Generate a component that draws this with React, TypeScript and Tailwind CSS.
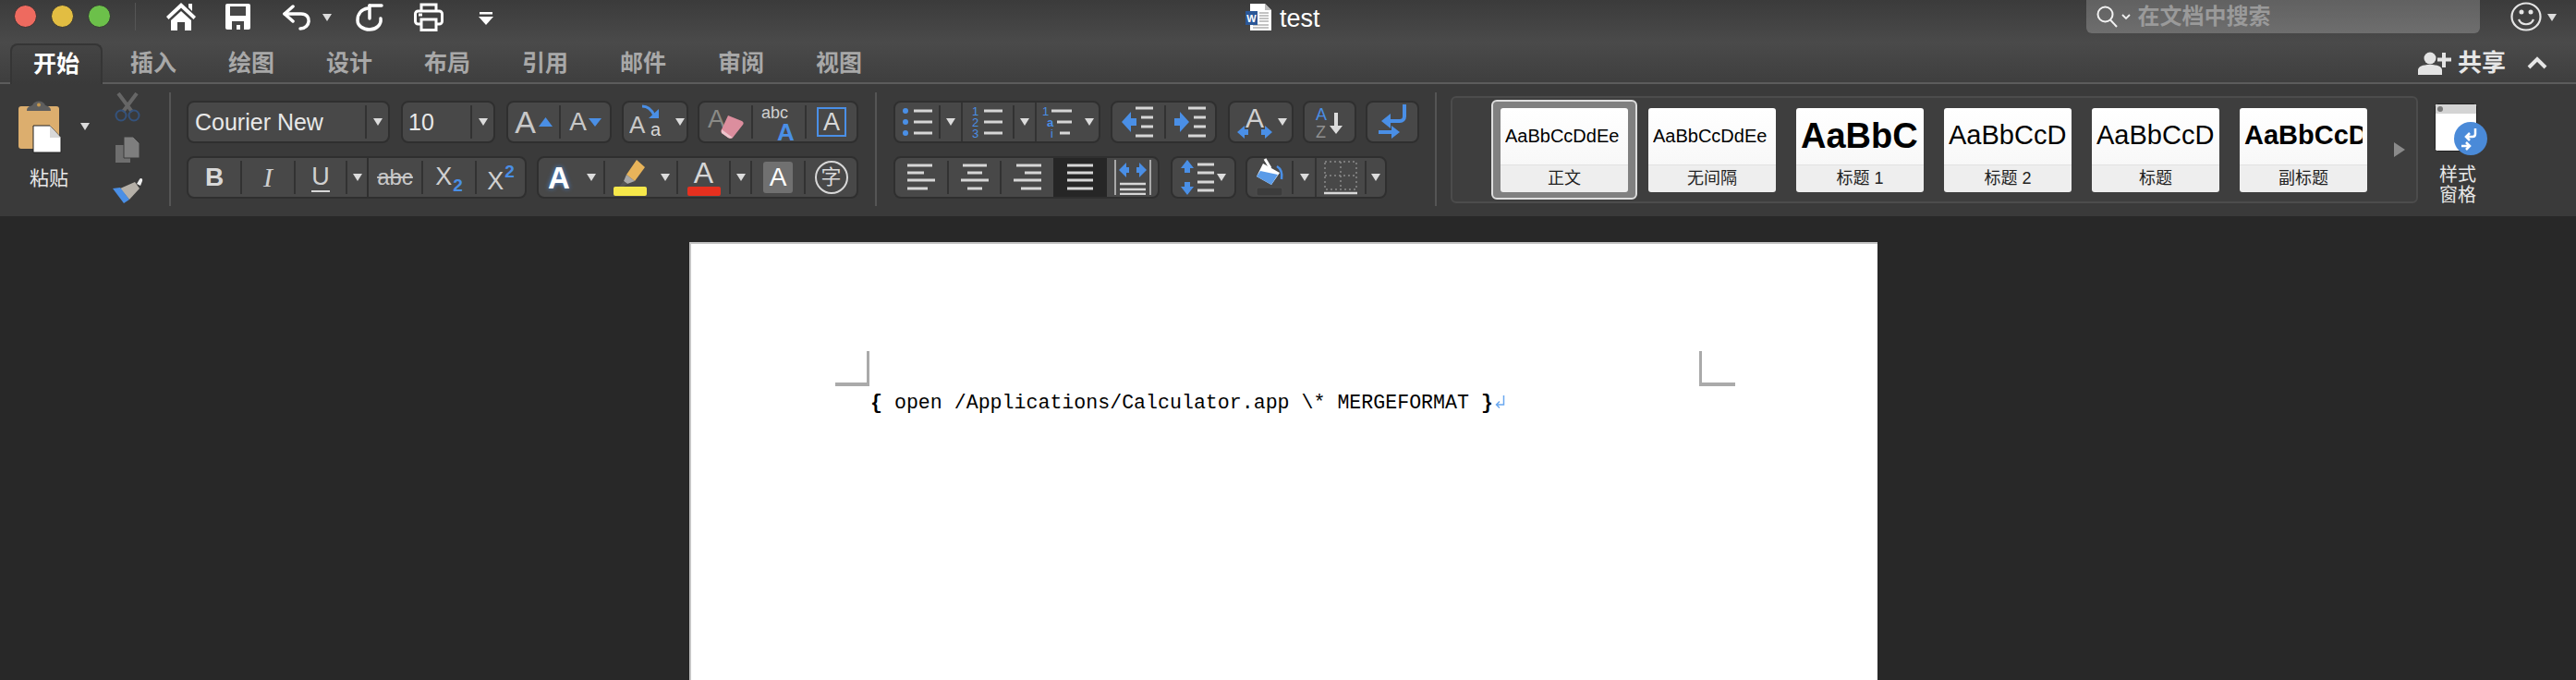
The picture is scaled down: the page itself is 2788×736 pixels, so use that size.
import React from 'react';

const BLUE = '#4a8fe6';
const ICON = '#d6d6d6';

function Caret({ className = '' }: { className?: string }) {
  return (
    <svg width="12" height="10" viewBox="0 0 12 10" className={className}>
      <path d="M1 1h10L6 9z" fill="#dcdcdc" />
    </svg>
  );
}

function Sep() {
  return <div className="w-[2px] h-[36px] bg-[#323232] shrink-0" />;
}

function Group({ className = '', children }: { className?: string; children: React.ReactNode }) {
  return (
    <div className={`h-[46px] rounded-[8px] bg-[#484848] border-2 border-[#2f2f2f] flex items-center shrink-0 overflow-hidden leading-none ${className}`}>
      {children}
    </div>
  );
}

function Cell({ className = '', children }: { className?: string; children?: React.ReactNode }) {
  return <div className={`h-full flex items-center justify-center shrink-0 ${className}`}>{children}</div>;
}

function StyleCard({ label, sample, textClass, selected }: { label: string; sample: string; textClass: string; selected?: boolean }) {
  const card = (
    <div className="w-[138px] h-[91px] rounded-[3px] overflow-hidden flex flex-col shrink-0">
      <div className="h-[61px] bg-gradient-to-b from-white to-[#f8f8f8] text-black px-[5px]">
        <div className="h-full flex items-center overflow-hidden whitespace-nowrap">
          <span className={textClass}>{sample}</span>
        </div>
      </div>
      <div className="h-[30px] bg-[#eeeeee] border-t border-[#e2e2e2] text-[18px] leading-[28px] text-[#222] text-center">{label}</div>
    </div>
  );
  if (selected) {
    return (
      <div className="w-[158px] h-[108px] -mr-[10px] rounded-[6px] border-2 border-[#dddddd] bg-[#808080] flex items-center justify-center shrink-0">
        {card}
      </div>
    );
  }
  return card;
}

export default function App() {
  return (
    <div className="w-[2788px] h-[736px] overflow-hidden bg-[#282828] flex flex-col font-['Liberation_Sans','Noto_Sans_CJK_SC',sans-serif]">
      <div className="bg-gradient-to-b from-[#3b3b3b] via-[#4a4a4a] to-[#3e3e3e] shrink-0">
        {/* title bar */}
        <div className="h-[44px] flex items-start">
          <div className="flex gap-[15px] ml-[15px] mt-[5px]">
            <div className="w-[25px] h-[25px] rounded-full bg-[#ee6a5f] border border-[#333]" />
            <div className="w-[25px] h-[25px] rounded-full bg-[#e2bd42] border border-[#333]" />
            <div className="w-[25px] h-[25px] rounded-full bg-[#6cc04a] border border-[#333]" />
          </div>
          <div className="w-[1px] h-[30px] bg-[#555] ml-[26px] mt-[3px]" />
          {/* home */}
          <svg width="32" height="30" viewBox="0 0 32 30" className="ml-[33px] mt-[3px]">
            <path d="M16 0 32 15l-2.500 3L16 5.500 2.500 18 0 15z M24 1h4v8l-4-4z" fill="#fff" />
            <path d="M16 9 27 19v11h-7v-9h-8v9H5V19z" fill="#fff" />
          </svg>
          {/* save */}
          <svg width="27" height="28" viewBox="0 0 27 28" className="ml-[32px] mt-[4px]">
            <path d="M2 0h23a2 2 0 0 1 2 2v24a2 2 0 0 1-2 2H2a2 2 0 0 1-2-2V2a2 2 0 0 1 2-2z" fill="#fff" />
            <rect x="5" y="3" width="17" height="10" fill="#474747" />
            <path d="M7 28v-9h13v9h-4v-5h-4v5z" fill="#474747" />
          </svg>
          {/* undo */}
          <svg width="32" height="28" viewBox="0 0 32 28" className="ml-[34px] mt-[5px]" fill="none" stroke="#fff" strokeWidth="3.500" strokeLinecap="round" strokeLinejoin="round">
            <path d="M12 2 3 10l9 8" />
            <path d="M3 10h18c12 0 10 16-1 16" />
          </svg>
          <Caret className="ml-[11px] mt-[14px]" />
          {/* redo */}
          <svg width="30" height="30" viewBox="0 0 30 30" className="ml-[25px] mt-[4px]" fill="none" stroke="#fff" strokeWidth="3.500" strokeLinecap="round">
            <path d="M15 2h13" />
            <path d="M15 2v14" />
            <path d="M13 5C6 6 2 11 2 18c0 6 6 10 13 10s13-5 12-12" />
          </svg>
          {/* print */}
          <svg width="32" height="31" viewBox="0 0 32 31" className="ml-[33px] mt-[3px]" fill="none" stroke="#fff" strokeWidth="3">
            <path d="M8 9V2h16v7" />
            <rect x="1.500" y="9" width="29" height="14" rx="3" />
            <path d="M8 18v11.500h16V18z" fill="#474747" />
            <path d="M5 13h4" />
          </svg>
          {/* customize */}
          <svg width="16" height="14" viewBox="0 0 16 14" className="ml-[38px] mt-[13px]">
            <rect x="1" y="0" width="14" height="2.500" fill="#fff" />
            <path d="M0 5h16l-8 9z" fill="#fff" />
          </svg>
          {/* doc title */}
          <svg width="28" height="29" viewBox="0 0 28 29" className="ml-[814px] mt-[4px]">
            <path d="M5 0h16l7 7v22H5z" fill="#fff" />
            <path d="M21 0v7h7z" fill="#bbb" />
            <path d="M15 10h10M15 13h10M15 16h10M15 19h10M8 23h17M8 26h17" stroke="#888" strokeWidth="1" />
            <rect x="0" y="8" width="13" height="15" fill="#2b5797" />
            <text x="6.500" y="20" fontSize="11" fontWeight="700" fill="#fff" textAnchor="middle" fontFamily="Liberation Sans">W</text>
          </svg>
          <div className="ml-[9px] mt-[2px] text-[27px] leading-[36px] text-white">test</div>
          {/* search */}
          <div className="ml-[829px] w-[426px] h-[36px] rounded-b-[6px] bg-gradient-to-b from-[#616161] to-[#6e6e6e] flex items-center">
            <svg width="24" height="24" viewBox="0 0 24 24" className="ml-[11px]" fill="none" stroke="#f2f2f2" strokeWidth="2">
              <circle cx="9.500" cy="9.500" r="8" />
              <path d="M15 15.500 22 23" />
            </svg>
            <svg width="10" height="7" viewBox="0 0 10 7" className="ml-[3px]" fill="none" stroke="#eee" strokeWidth="1.800">
              <path d="M1 1l4 4 4-4" />
            </svg>
            <span className="ml-[8px] text-[24px] font-bold text-[#9a9a9a]">在文档中搜索</span>
          </div>
          {/* smiley */}
          <svg width="34" height="32" viewBox="0 0 34 32" className="ml-[33px] mt-[2px]" fill="none" stroke="#e4e4e4" strokeWidth="2.200">
            <ellipse cx="17" cy="16" rx="15.500" ry="14.500" />
            <path d="M9 19c3 7 13 7 16 0" />
            <circle cx="12" cy="11" r="1.400" fill="#e4e4e4" />
            <circle cx="22" cy="11" r="1.400" fill="#e4e4e4" />
          </svg>
          <Caret className="ml-[5px] mt-[14px]" />
        </div>

        {/* tabs */}
        <div className="h-[47px] flex items-end border-b-2 border-[#5c5c5c] text-[25px] font-bold text-[#a8a8a8]">
          <div className="ml-[11px] w-[100px] h-[44px] -mb-[2px] rounded-t-[8px] bg-gradient-to-b from-[#444444] to-[#3a3a3a] border-2 border-b-0 border-[#353535] text-white text-center leading-[40px]">开始</div>
          <div className="ml-[2px] w-[106px] h-[42px] text-center leading-[42px]">插入</div>
          <div className="w-[106px] h-[42px] text-center leading-[42px]">绘图</div>
          <div className="w-[106px] h-[42px] text-center leading-[42px]">设计</div>
          <div className="w-[106px] h-[42px] text-center leading-[42px]">布局</div>
          <div className="w-[106px] h-[42px] text-center leading-[42px]">引用</div>
          <div className="w-[106px] h-[42px] text-center leading-[42px]">邮件</div>
          <div className="w-[106px] h-[42px] text-center leading-[42px]">审阅</div>
          <div className="w-[106px] h-[42px] text-center leading-[42px]">视图</div>
          <div className="ml-auto h-[42px] flex items-center text-[#e6e6e6]">
            <svg width="36" height="25" viewBox="0 0 36 25">
              <circle cx="13" cy="7" r="6.500" fill="#e4e4e4" />
              <path d="M0 25v-5c0-4 5-6 13-6s13 2 13 6v5z" fill="#e4e4e4" />
              <path d="M28 1v16M21 8.500h15" stroke="#e4e4e4" strokeWidth="4" />
            </svg>
            <span className="ml-[7px] leading-[42px] text-[26px]">共享</span>
            <svg width="22" height="14" viewBox="0 0 22 14" className="ml-[23px] mr-[31px]" fill="none" stroke="#e6e6e6" strokeWidth="4">
              <path d="M2 12l9-9 9 9" />
            </svg>
          </div>
        </div>
      </div>

      {/* ribbon */}
      <div className="h-[143px] bg-[#3a3a3a] flex items-start shrink-0 text-[#d6d6d6]">
        {/* clipboard */}
        <div className="ml-[20px] mt-[16px] w-[71px] flex flex-col items-start shrink-0">
          <div className="flex items-center">
            <svg width="48" height="59" viewBox="0 0 48 59">
              <rect x="0" y="8" width="44" height="46" rx="3" fill="#dcae6e" />
              <path d="M9 13c0-5 4-5 6-6 2-6 12-6 14 0 2 1 6 1 6 6z" fill="#5e5e5e" />
              <circle cx="22" cy="6.500" r="2" fill="#c4974e" />
              <path d="M16 29h18l12 13v16H16z" fill="#fff" stroke="#222" strokeWidth="1" />
              <path d="M34 29v13h12z" fill="#d8d8d8" />
            </svg>
            <Caret className="ml-[18px]" />
          </div>
          <div className="ml-[12px] mt-[15px] text-[21px] leading-[24px] text-[#e8e8e8]">粘贴</div>
        </div>
        <div className="ml-[30px] mt-[9px] w-[34px] flex flex-col items-center gap-[16px] shrink-0">
          <svg width="28" height="32" viewBox="0 0 28 32" fill="none">
            <path d="M4 1 19 21M24 1 9 21" stroke="#666" strokeWidth="4" />
            <circle cx="7" cy="25" r="5.500" stroke="#34527c" strokeWidth="2" />
            <circle cx="21" cy="25" r="5.500" stroke="#34527c" strokeWidth="2" />
          </svg>
          <svg width="26" height="28" viewBox="0 0 26 28">
            <rect x="0" y="9" width="16" height="19" fill="#6e6e6e" />
            <path d="M9 0h10l7 7v16H9z" fill="#7e7e7e" stroke="#3a3a3a" strokeWidth="1" />
          </svg>
          <svg width="33" height="28" viewBox="0 0 33 28">
            <path d="M26 7l3-5c1-2 4-1 3 2l-2 5z" fill="#eee" />
            <path d="M8 12 24 5l5 7-11 12z" fill="#b5b0a8" />
            <path d="M0 12l8-1 10 13-6 4z" fill="#4a8fe6" />
          </svg>
        </div>
        <div className="w-[2px] h-[123px] bg-[#555] ml-[28px] mt-[9px] shrink-0" />

        {/* font section */}
        <div className="ml-[17px] mt-[18px] w-[727px] flex flex-col gap-[14px] shrink-0">
          <div className="flex">
            <Group className="w-[220px]">
              <Cell className="w-[191px] justify-start pl-[7px] text-[25px] text-[#e8e8e8]">Courier New</Cell>
              <Sep />
              <Cell className="flex-1"><Caret /></Cell>
            </Group>
            <Group className="w-[102px] ml-[12px]">
              <Cell className="w-[73px] justify-start pl-[6px] text-[25px] text-[#e8e8e8]">10</Cell>
              <Sep />
              <Cell className="flex-1"><Caret /></Cell>
            </Group>
            <Group className="w-[114px] ml-[12px]">
              <Cell className="w-[55px] gap-[3px] text-[34px] text-[#c8c8c8]">
                <span>A</span>
                <svg width="15" height="10" viewBox="0 0 15 10"><path d="M7.500 0 15 10H0z" fill={BLUE} /></svg>
              </Cell>
              <Sep />
              <Cell className="flex-1 gap-[2px] text-[28px] text-[#c8c8c8]">
                <span>A</span>
                <svg width="14" height="9" viewBox="0 0 14 9"><path d="M0 0h14L7 9z" fill={BLUE} /></svg>
              </Cell>
            </Group>
            <Group className="w-[72px] ml-[11px]">
              <svg width="48" height="38" viewBox="0 0 48 38" className="ml-[6px]">
                <text x="0" y="31" fontSize="26" fill="#c8c8c8" fontFamily="Liberation Sans">A</text>
                <text x="23" y="34" fontSize="20" fill="#d8d8d8" fontFamily="Liberation Sans">a</text>
                <path d="M14 2c6 0 10 3 13 10" fill="none" stroke={BLUE} strokeWidth="3" />
                <path d="M21 15h11V5z" fill={BLUE} />
              </svg>
              <Caret className="ml-[1px]" />
            </Group>
            <Group className="w-[174px] ml-[10px]">
              <Cell className="w-[56px]">
                <svg width="42" height="40" viewBox="0 0 42 40">
                  <text x="2" y="26" fontSize="28" fill="#8a8a86" fontFamily="Liberation Sans">A</text>
                  <path d="M24 13 39 19c2 1 2 3 1 4L29 37c-1 1-3 1-5 0l-7-5c-1-1-1-3 0-4z" fill="#dc8e9e" />
                  <path d="M17 28l12 9c-2 1-4 1-5 0l-7-5z" fill="#eec4cc" />
                </svg>
              </Cell>
              <Sep />
              <Cell className="w-[56px]">
                <svg width="38" height="42" viewBox="0 0 38 42" className="overflow-visible">
                  <text x="0" y="17" fontSize="18" fill="#d0d0d0" fontFamily="Liberation Sans">abc</text>
                  <text x="17" y="41" fontSize="26" fontWeight="700" fill={BLUE} fontFamily="Liberation Sans">A</text>
                </svg>
              </Cell>
              <Sep />
              <Cell className="flex-1">
                <div className="w-[32px] h-[32px] border-[2px] border-[#4a8fe6] flex items-center justify-center text-[27px] text-[#d8d8d8]">A</div>
              </Cell>
            </Group>
          </div>
          <div className="flex">
            <Group className="w-[368px]">
              <Cell className="w-[56px] text-[28px] font-bold text-[#d8d8d8]">B</Cell>
              <Sep />
              <Cell className="w-[56px] text-[30px] italic font-['Liberation_Serif'] text-[#d0d0d0]">I</Cell>
              <Sep />
              <Cell className="w-[54px]">
                <span className="text-[27px] leading-[29px] border-b-[2px] border-[#d8d8d8] text-[#d0d0d0]">U</span>
              </Cell>
              <Sep />
              <Cell className="w-[21px]"><Caret /></Cell>
              <div className="w-[2px] h-full bg-[#2f2f2f] shrink-0" />
              <Cell className="w-[57px] text-[24px] line-through text-[#c8c8c8]">abc</Cell>
              <Sep />
              <Cell className="w-[56px] items-start pt-[7px] text-[27px] text-[#d0d0d0]">
                X<span className="text-[19px] font-bold text-[#4a8fe6] mt-[13px] ml-[1px]">2</span>
              </Cell>
              <Sep />
              <Cell className="flex-1 items-start pt-[12px] text-[27px] text-[#d0d0d0]">
                X<span className="text-[19px] font-bold text-[#4a8fe6] -mt-[7px] ml-[1px]">2</span>
              </Cell>
            </Group>
            <Group className="w-[348px] ml-[11px]">
              <Cell className="w-[44px] text-[33px] font-bold text-white [text-shadow:0_0_5px_#4a8fe6]">A</Cell>
              <Cell className="w-[26px]"><Caret /></Cell>
              <Sep />
              <Cell className="w-[53px]">
                <svg width="38" height="42" viewBox="0 0 38 42">
                  <path d="M26 2 35 10 24 25l-9-7z" fill="#e8b45a" />
                  <path d="M15 18l9 7-8 3-4-3z" fill="#a8a8a8" />
                  <path d="M12 25l4 3-4 3H7z" fill="#555" />
                  <rect x="1" y="31" width="36" height="10" rx="2" fill="#f6e84a" />
                </svg>
              </Cell>
              <Cell className="w-[24px]"><Caret /></Cell>
              <Sep />
              <Cell className="w-[55px] flex-col">
                <span className="text-[32px] leading-[30px] text-[#d6d6d6]">A</span>
                <div className="w-[36px] h-[10px] rounded-[2px] bg-[#e6301f]" />
              </Cell>
              <Sep />
              <Cell className="w-[21px]"><Caret /></Cell>
              <Sep />
              <Cell className="w-[56px]">
                <div className="w-[32px] h-[34px] rounded-[3px] bg-[#707070] flex items-center justify-center text-[28px] text-white">A</div>
              </Cell>
              <Sep />
              <Cell className="flex-1">
                <div className="w-[36px] h-[36px] rounded-full border-2 border-[#d8d8d8] flex items-center justify-center text-[22px] text-[#d8d8d8]">字</div>
              </Cell>
            </Group>
          </div>
        </div>
        <div className="w-[2px] h-[123px] bg-[#555] ml-[18px] mt-[9px] shrink-0" />

        {/* paragraph section */}
        <div className="ml-[18px] mt-[18px] w-[569px] flex flex-col gap-[14px] shrink-0">
          <div className="flex">
            <Group className="w-[224px]">
              <Cell className="w-[47px]">
                <svg width="34" height="34" viewBox="0 0 34 34">
                  <circle cx="4" cy="5" r="3" fill={BLUE} /><circle cx="4" cy="17" r="3" fill={BLUE} /><circle cx="4" cy="29" r="3" fill={BLUE} />
                  <path d="M13 5h20M13 17h20M13 29h20" stroke={ICON} strokeWidth="3" />
                </svg>
              </Cell>
              <Sep />
              <Cell className="w-[22px]"><Caret /></Cell>
              <div className="w-[2px] h-full bg-[#333] shrink-0" />
              <Cell className="w-[54px]">
                <svg width="34" height="38" viewBox="0 0 34 38">
                  <text x="0" y="12" fontSize="13" fill={BLUE} fontFamily="Liberation Sans">1</text>
                  <text x="0" y="24" fontSize="13" fill={BLUE} fontFamily="Liberation Sans">2</text>
                  <text x="0" y="36" fontSize="13" fill={BLUE} fontFamily="Liberation Sans">3</text>
                  <path d="M13 7h20M13 19h20M13 31h20" stroke={ICON} strokeWidth="3" />
                </svg>
              </Cell>
              <Sep />
              <Cell className="w-[22px]"><Caret /></Cell>
              <div className="w-[2px] h-full bg-[#333] shrink-0" />
              <Cell className="w-[46px]">
                <svg width="34" height="38" viewBox="0 0 34 38">
                  <text x="0" y="12" fontSize="13" fill={BLUE} fontFamily="Liberation Sans">1</text>
                  <text x="5" y="24" fontSize="13" fontWeight="700" fill={BLUE} fontFamily="Liberation Sans">a</text>
                  <text x="9" y="36" fontSize="13" fill={BLUE} fontFamily="Liberation Sans">i</text>
                  <path d="M10 7h22M16 19h16M19 31h11" stroke={ICON} strokeWidth="3" />
                </svg>
              </Cell>
              <Cell className="flex-1"><Caret /></Cell>
            </Group>
            <Group className="w-[115px] ml-[11px]">
              <Cell className="w-[56px]">
                <svg width="36" height="36" viewBox="0 0 36 36">
                  <path d="M0 18 10 7v7h6v8h-6v7z" fill={BLUE} />
                  <path d="M15 3h19M21 13h13M21 23h13M15 33h19" stroke={ICON} strokeWidth="3" />
                </svg>
              </Cell>
              <Sep />
              <Cell className="flex-1">
                <svg width="36" height="36" viewBox="0 0 36 36">
                  <path d="M16 18 6 7v7H0v8h6v7z" fill={BLUE} />
                  <path d="M15 3h19M21 13h13M21 23h13M15 33h19" stroke={ICON} strokeWidth="3" />
                </svg>
              </Cell>
            </Group>
            <Group className="w-[71px] ml-[12px]">
              <svg width="38" height="40" viewBox="0 0 38 40" className="ml-[8px]">
                <text x="19" y="26" fontSize="30" textAnchor="middle" fill="#d0d0d0" fontFamily="Liberation Sans">A</text>
                <path d="M0 31 8 24v4h4v6H8v4zM38 31 30 24v4h-4v6h4v4z" fill={BLUE} />
              </svg>
              <Caret className="ml-[5px]" />
            </Group>
            <Group className="w-[58px] ml-[10px] justify-center gap-[3px]">
              <svg width="36" height="38" viewBox="0 0 36 38" className="overflow-visible">
                <text x="3" y="17" fontSize="18" fill={BLUE} fontFamily="Liberation Sans">A</text>
                <text x="3" y="36" fontSize="18" fill="#909090" fontFamily="Liberation Sans">Z</text>
                <path d="M23 9h4v14h5l-7 9-7-9h5z" fill="#dcdcdc" />
              </svg>
            </Group>
            <Group className="w-[58px] ml-[10px] justify-center">
              <svg width="34" height="38" viewBox="0 0 34 38">
                <path d="M30 1v12c0 3-2 5-5 5H14" fill="none" stroke={BLUE} strokeWidth="4" strokeLinecap="round" />
                <path d="M15 10v16L5 18z" fill={BLUE} />
                <path d="M2 30h16" stroke={BLUE} strokeWidth="4" />
                <path d="M16 23v14l9-7z" fill={BLUE} />
              </svg>
            </Group>
          </div>
          <div className="flex">
            <Group className="w-[288px]">
              <Cell className="w-[56px]">
                <svg width="30" height="30" viewBox="0 0 30 30"><path d="M0 2h27M0 10h18M0 18h30M0 27h22" stroke={ICON} strokeWidth="3" /></svg>
              </Cell>
              <Sep />
              <Cell className="w-[55px]">
                <svg width="30" height="30" viewBox="0 0 30 30"><path d="M2 2h26M7 10h16M0 18h30M7 27h16" stroke={ICON} strokeWidth="3" /></svg>
              </Cell>
              <Sep />
              <Cell className="w-[56px]">
                <svg width="30" height="30" viewBox="0 0 30 30"><path d="M3 2h27M12 10h18M0 18h30M8 27h22" stroke={ICON} strokeWidth="3" /></svg>
              </Cell>
              <Cell className="w-[58px] bg-[#262626]">
                <svg width="30" height="30" viewBox="0 0 30 30"><path d="M1 2h28M1 10h28M1 18h28M1 27h28" stroke={ICON} strokeWidth="3" /></svg>
              </Cell>
              <Cell className="flex-1">
                <svg width="40" height="38" viewBox="0 0 40 38">
                  <path d="M1 0v38M39 0v38" stroke="#a8a8a8" strokeWidth="2" />
                  <path d="M5 11 13 3v5h3v6h-3v5zM35 11 27 3v5h-3v6h3v5z" fill={BLUE} />
                  <path d="M6 26h28M6 32h28M6 37h28" stroke={ICON} strokeWidth="2.500" />
                </svg>
              </Cell>
            </Group>
            <Group className="w-[71px] ml-[12px]">
              <svg width="38" height="38" viewBox="0 0 38 38" className="ml-[8px]">
                <path d="M8 0l7 9h-4v5H5V9H1zM8 38l7-9h-4v-5H5v5H1z" fill={BLUE} />
                <path d="M19 5h18M19 14h18M19 24h18M19 33h18" stroke={ICON} strokeWidth="3" />
              </svg>
              <Caret className="ml-[1px]" />
            </Group>
            <Group className="w-[153px] ml-[10px]">
              <Cell className="w-[48px]">
                <svg width="36" height="42" viewBox="0 0 36 42">
                  <path d="M11 6 29 16 20 29 4 20z" fill="#fff" />
                  <path d="M8 14 27 18 20 29 4 20z" fill="#5a9be8" />
                  <path d="M13 1 19 11" stroke="#fff" strokeWidth="3" />
                  <path d="M26 9c5 3 6 8 5 14" fill="none" stroke={BLUE} strokeWidth="2.500" />
                  <rect x="4" y="32" width="28" height="9" rx="2" fill="#3c3c3c" stroke="#4e4e4e" />
                </svg>
              </Cell>
              <Sep />
              <Cell className="w-[23px]"><Caret /></Cell>
              <div className="w-[2px] h-full bg-[#333] shrink-0" />
              <Cell className="w-[52px]">
                <svg width="36" height="38" viewBox="0 0 36 38" fill="none">
                  <path d="M1 2h34v30H1zM18 2v30M1 17h34" stroke="#8a8a8a" strokeWidth="1.500" strokeDasharray="2 3" />
                  <path d="M0 36h36" stroke="#d8d8d8" strokeWidth="2.500" />
                </svg>
              </Cell>
              <Sep />
              <Cell className="flex-1"><Caret /></Cell>
            </Group>
          </div>
        </div>
        <div className="w-[2px] h-[123px] bg-[#555] ml-[17px] mt-[9px] shrink-0" />

        {/* styles gallery */}
        <div className="ml-[15px] mt-[13px] w-[1047px] h-[116px] rounded-[6px] border-2 border-[#4c4c4c] bg-[#3e3e3e] flex items-center shrink-0">
          <div className="ml-[42px] flex items-center gap-[22px]">
            <StyleCard selected label="正文" sample="AaBbCcDdEe" textClass="text-[20px]" />
            <StyleCard label="无间隔" sample="AaBbCcDdEe" textClass="text-[20px]" />
            <StyleCard label="标题 1" sample="AaBbC" textClass="text-[38px] font-bold" />
            <StyleCard label="标题 2" sample="AaBbCcD" textClass="text-[29px]" />
            <StyleCard label="标题" sample="AaBbCcD" textClass="text-[29px]" />
            <StyleCard label="副标题" sample="AaBbCcD" textClass="text-[29px] font-bold" />
          </div>
          <svg width="12" height="16" viewBox="0 0 12 16" className="ml-[29px]"><path d="M0 0l12 8-12 8z" fill="#8a8a8a" /></svg>
        </div>

        {/* styles pane */}
        <div className="ml-[18px] mt-[21px] w-[57px] flex flex-col shrink-0">
          <svg width="57" height="56" viewBox="0 0 57 56">
            <rect x="0.500" y="0.500" width="45" height="51" rx="2" fill="#fff" stroke="#222" />
            <rect x="1" y="1" width="44" height="10" fill="#d4d4d4" />
            <circle cx="6" cy="6" r="3" fill="#777" />
            <ellipse cx="39" cy="38" rx="18" ry="18" fill="#4a8ad8" />
            <path d="M44 27v6c0 2-1 3-3 3h-5M38 32l-4 4 4 4M29 46h8M34 42l4 4-4 4" fill="none" stroke="#fff" strokeWidth="2.500" />
          </svg>
          <div className="mt-[10px] ml-[5px] text-[20px] leading-[22px] text-[#e8e8e8] whitespace-nowrap">样式<br />窗格</div>
        </div>
      </div>

      {/* document */}
      <div className="flex-1 pt-[28px] pl-[746px] min-h-0">
        <div className="w-[1286px] h-full bg-white border-t-2 border-l-2 border-[#c4c4c4] pt-[116px] pl-[156px] pr-[154px]">
          <div className="flex justify-between">
            <div className="w-[37px] h-[38px] border-r-[3px] border-b-[4px] border-[#aaaaaa]" />
            <div className="w-[39px] h-[38px] border-l-[3px] border-b-[4px] border-[#aaaaaa]" />
          </div>
          <div className="mt-[6px] ml-[38px] flex items-center text-[21.600px] leading-[24px] text-black whitespace-pre font-['Liberation_Mono',monospace]">
            <span className="font-bold">{'{'}</span>
            <span>{' open /Applications/Calculator.app \\* MERGEFORMAT '}</span>
            <span className="font-bold">{'}'}</span>
            <svg width="11" height="16" viewBox="0 0 11 16" fill="none" stroke="#6aa8f0" strokeWidth="1.500" className="ml-[2px]">
              <path d="M9.500 0v10H2M5 6.500 1.500 10 5 13.500" />
            </svg>
          </div>
        </div>
      </div>
    </div>
  );
}
